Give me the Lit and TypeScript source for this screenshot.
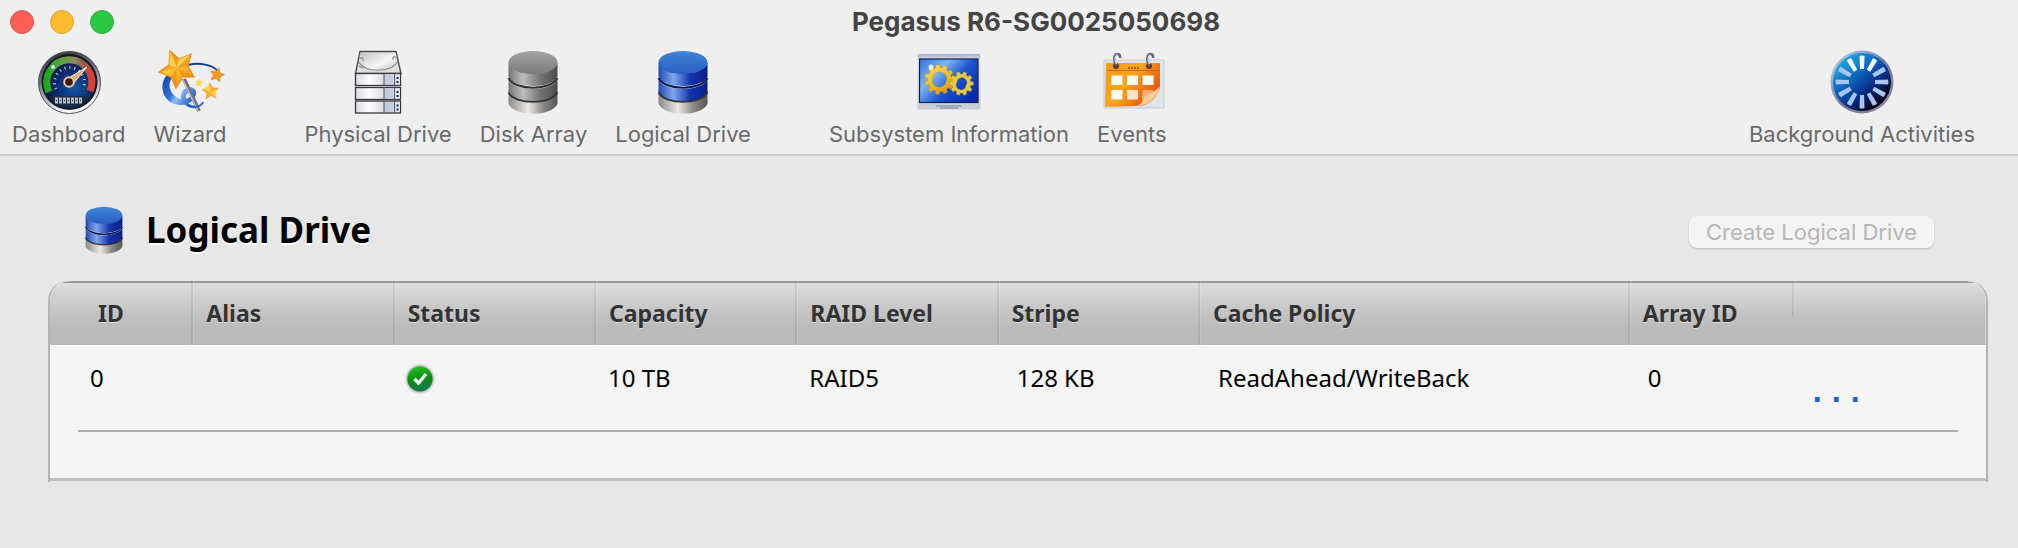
import { LitElement, html, css, svg } from "lit";
import { customElement } from "lit/decorators.js";

/* Points of a star with the given number of teeth. */
function starPoints(cx: number, cy: number, outer: number, inner: number, n: number, start: number): string {
  const pts: string[] = [];
  for (let i = 0; i < n * 2; i++) {
    const r = i % 2 ? inner : outer;
    const a = ((start + (i * 180) / n) * Math.PI) / 180;
    pts.push(`${(cx + r * Math.cos(a)).toFixed(2)},${(cy + r * Math.sin(a)).toFixed(2)}`);
  }
  return pts.join(" ");
}

/* Outline of a cog wheel with squared teeth. */
function gearPoints(cx: number, cy: number, outer: number, inner: number, n: number): string {
  const pts: string[] = [];
  const step = 360 / n;
  for (let i = 0; i < n; i++) {
    const shape: [number, number][] = [[-0.34, inner], [-0.2, outer], [0.2, outer], [0.34, inner]];
    for (const [f, r] of shape) {
      const a = ((i + f) * step * Math.PI) / 180;
      pts.push(`${(cx + r * Math.cos(a)).toFixed(2)},${(cy + r * Math.sin(a)).toFixed(2)}`);
    }
  }
  return pts.join(" ");
}

const dashboardIcon = html`<svg class="icon" viewBox="0 0 64 64" aria-hidden="true">
  <defs>
    <linearGradient id="d-rim" x1="0" y1="0" x2="0.3" y2="1">
      <stop offset="0" stop-color="#2c2c30" /><stop offset="0.45" stop-color="#6c6f80" /><stop offset="1" stop-color="#f4f4fa" />
    </linearGradient>
    <radialGradient id="d-face" cx="0.6" cy="0.6" r="0.6">
      <stop offset="0" stop-color="#1558a8" /><stop offset="0.55" stop-color="#0b2b6e" /><stop offset="1" stop-color="#10182c" />
    </radialGradient>
    <linearGradient id="d-arc" x1="0" y1="0" x2="1" y2="0">
      <stop offset="0" stop-color="#1fa423" /><stop offset="0.3" stop-color="#55a542" /><stop offset="0.6" stop-color="#8f8a5a" /><stop offset="0.82" stop-color="#93604a" /><stop offset="1" stop-color="#e03a34" />
    </linearGradient>
  </defs>
  <circle cx="32.500" cy="32.500" r="31" fill="url(#d-rim)" stroke="#4a4a58" stroke-width="1" />
  <circle cx="32.500" cy="32" r="28" fill="#17191f" />
  <circle cx="32" cy="32" r="26" fill="url(#d-face)" />
  <path d="M12 42A22.500 22.500 0 1 1 53 41" fill="none" stroke="url(#d-arc)" stroke-width="7" />
  <path d="M19 39A15 15 0 1 1 46 39" fill="none" stroke="#c9d6ee" stroke-width="3" stroke-dasharray="1 4" />
  <path d="M13 46h39l-5 7q-14 9-29 0z" fill="#1b2c46" />
  <path d="M18 50.500h28" stroke="#b4c0cc" stroke-width="6" stroke-dasharray="3 1" />
  <path d="M19 50.500h27" stroke="#3a4656" stroke-width="1.500" stroke-dasharray="1 3" />
  <path d="M30 29L50 17L35 35z" fill="#e8b070" stroke="#fff0cf" stroke-width="1" />
  <circle cx="32" cy="32" r="4.800" fill="#3b1710" stroke="#f2c79c" stroke-width="2" />
  <circle cx="16" cy="17" r="2" fill="#fff" opacity="0.850" />
</svg>`;

const wizardIcon = html`<svg class="icon" viewBox="0 0 64 64" aria-hidden="true">
  <defs>
    <linearGradient id="w-star" x1="0" y1="0" x2="0.8" y2="1">
      <stop offset="0" stop-color="#f7941d" /><stop offset="0.45" stop-color="#ffc83a" /><stop offset="1" stop-color="#f08a10" />
    </linearGradient>
    <linearGradient id="w-swirl" x1="0" y1="0" x2="1" y2="0.6">
      <stop offset="0" stop-color="#123fa6" /><stop offset="0.450" stop-color="#2f74dc" /><stop offset="0.600" stop-color="#8cc0f6" /><stop offset="1" stop-color="#1a55c4" />
    </linearGradient>
  </defs>
  <path d="M30 15C42 12 54 15 60 21" fill="none" stroke="#123c9c" stroke-width="2" />
  <path d="M9 25C1 34 4 48 14 53C25 58 36 53 38 44C39 36 28 35 24 42C20 50 28 60 40 58C31 56 27 51 28 46C30 40 35 41 34 44C31 50 22 51 17 46C10 40 10 32 15 27z" fill="url(#w-swirl)" />
  <path d="M26 29L41 61" stroke="#6e7084" stroke-width="4" />
  <path d="M25 30L40 61" stroke="#b9bccb" stroke-width="1.500" />
  <path d="M45 52C43 57 36 58 30 55" fill="none" stroke="#2460c8" stroke-width="2" />
  <polygon points="12,1 21,9 33,4 30,16 36,27 25,27 18,38 13,27 1,22 11,15" fill="url(#w-star)" stroke="#ee8d1a" stroke-width="1.200" />
  <path d="M12 1L19 18L21 9zM33 4L19 18L30 16zM36 27L19 18L25 27zM18 38L19 18L13 27zM1 22L19 18L11 15z" fill="#d96f08" opacity="0.350" />
  <path d="M12 1L19 18L11 15zM33 4L19 18L21 9z" fill="#ffe070" opacity="0.500" />
  <polygon points="${starPoints(59, 25, 7.500, 3.600, 5, -75)}" fill="#f59a1e" stroke="#d97a14" stroke-width="0.600" />
  <polygon points="${starPoints(52.500, 41.500, 8.500, 4, 5, -95)}" fill="#fbb024" stroke="#e88d1a" stroke-width="0.600" />
  <path d="M52 34L52.500 42L45 39zM60 39L52.500 42L57 48z" fill="#ffd659" opacity="0.800" />
  <polygon points="${starPoints(41, 33, 4.500, 2.200, 5, -80)}" fill="#ffd84a" />
</svg>`;

const driveBay = (y: number) => svg`
  <rect x="9.500" y=${y} width="45" height="12" fill="url(#p-bay)" stroke="#38383c" stroke-width="1.300" />
  <rect x="38" y=${y + 1} width="9" height="10" fill="#c3cde0" />
  <path d=${`M38 ${y}v12M48.500 ${y}v12`} stroke="#4b5364" stroke-width="1" />
  <rect x="49" y=${y + 1} width="5" height="10" fill="#dce4f2" />
  <path d=${`M50.500 ${y + 4.500}h2M50.500 ${y + 8.500}h2`} stroke="#1c2c58" stroke-width="2" />`;

const physicalIcon = html`<svg class="icon" viewBox="0 0 64 64" aria-hidden="true">
  <defs>
    <linearGradient id="p-bay" x1="0" y1="0" x2="1" y2="0">
      <stop offset="0" stop-color="#d9d9de" /><stop offset="0.3" stop-color="#fdfdff" /><stop offset="0.6" stop-color="#dfdfe4" />
    </linearGradient>
    <linearGradient id="p-top" x1="0" y1="0" x2="1" y2="1">
      <stop offset="0" stop-color="#c4c4c4" /><stop offset="0.6" stop-color="#f8f8f8" /><stop offset="1" stop-color="#b4b4b4" />
    </linearGradient>
  </defs>
  <path d="M14 1.500h36l5 22H9.500z" fill="#dedede" stroke="#4a4a4a" stroke-width="1.400" />
  <path d="M14 3C10 26 53 26 50 3z" fill="url(#p-top)" />
  <path d="M13 12C18 23 46 23 51 12" fill="none" stroke="#8a8a8a" stroke-width="1.200" />
  <path d="M14 8h3v3M50 7h-3v3M13 16l4 2" fill="none" stroke="#777" stroke-width="1" />
  ${[23.500, 37.500, 51].map(driveBay)}
</svg>`;

/* Three stacked discs, all grey or with the upper two in blue. */
function stackIcon(id: string, cls: string, blue: boolean) {
  const topA = blue ? "#3f86d4" : "#a2a2a2";
  const topB = blue ? "#2a5cc4" : "#7c7c7c";
  return html`<svg class=${cls} viewBox="0 0 64 64" aria-hidden="true">
    <defs>
      <linearGradient id="${id}-a" x1="0" y1="0" x2="1" y2="0">
        <stop offset="0" stop-color=${blue ? "#2448b4" : "#767676"} />
        <stop offset="0.300" stop-color=${blue ? "#7ea6ea" : "#bdbdbd"} />
        <stop offset="0.650" stop-color=${blue ? "#1434ac" : "#747474"} />
        <stop offset="1" stop-color=${blue ? "#081f86" : "#4a4a4a"} />
      </linearGradient>
      <linearGradient id="${id}-b" x1="0" y1="0" x2="1" y2="0">
        <stop offset="0" stop-color="#8c8a88" /><stop offset="0.400" stop-color="#ebe8e6" />
        <stop offset="0.700" stop-color="#8e8b89" /><stop offset="1" stop-color="#565452" />
      </linearGradient>
      <linearGradient id="${id}-t" x1="0" y1="0" x2="0" y2="1">
        <stop offset="0" stop-color=${topA} /><stop offset="1" stop-color=${topB} />
      </linearGradient>
    </defs>
    <path d="M7.500 41C15 56 49 56 56.500 41V54C50 67 14 67 7.500 54z" fill="url(#${id}-b)" />
    <path d="M7.500 30C15 42 49 42 56.500 30V43C50 55 14 55 7.500 43z" fill="url(#${id}-a)" />
    <path d="M7.500 42.500C14 55 50 55 56.500 42.500" fill="none" stroke="#353535" stroke-width="1.800" />
    <path d="M7.500 13V27C14 39 50 39 56.500 27V13z" fill="url(#${id}-a)" />
    <path d="M7.500 28C14 41 50 41 56.500 28" fill="none" stroke=${blue ? "#0a1750" : "#303030"} stroke-width="2" />
    <ellipse cx="32" cy="12.500" rx="24.500" ry="11.500" fill="url(#${id}-t)" />
  </svg>`;
}

const systemIcon = html`<svg class="icon" viewBox="0 0 64 64" aria-hidden="true">
  <defs>
    <linearGradient id="s-screen" x1="0" y1="0" x2="1" y2="0.7">
      <stop offset="0" stop-color="#2c72da" /><stop offset="0.350" stop-color="#7db4f2" /><stop offset="0.650" stop-color="#1a50d0" /><stop offset="1" stop-color="#0a2db0" />
    </linearGradient>
    <linearGradient id="s-frame" x1="0" y1="0" x2="0" y2="1">
      <stop offset="0" stop-color="#a4b0cc" /><stop offset="0.120" stop-color="#e2e6ee" /><stop offset="1" stop-color="#c6ccd8" />
    </linearGradient>
    <linearGradient id="s-gear" x1="0" y1="0" x2="0.5" y2="1">
      <stop offset="0" stop-color="#ffe45a" /><stop offset="1" stop-color="#e0a010" />
    </linearGradient>
  </defs>
  <rect x="0.500" y="4" width="63" height="55.500" rx="1.500" fill="url(#s-frame)" />
  <rect x="2.500" y="9" width="58.500" height="43.500" fill="url(#s-screen)" stroke="#17203c" stroke-width="1.200" />
  <path fill-rule="evenodd" d="M${gearPoints(22.500, 29.500, 15, 12, 11).replace(/ /g, "L")}zM16 27a7 7 0 1 0 13 5a7 7 0 1 0 -13 -5z" fill="url(#s-gear)" stroke="#c08a0c" stroke-width="0.400" />
  <path fill-rule="evenodd" d="M${gearPoints(44.500, 33.500, 12, 9.500, 10).replace(/ /g, "L")}zM40 32a5 5 0 1 0 9 3.500a5 5 0 1 0 -9 -3.500z" fill="#e2ca42" stroke="#a88c20" stroke-width="0.400" />
  <circle cx="14" cy="17" r="2.500" fill="#fff" opacity="0.800" />
  <path d="M19 56h26M23 58h18" stroke="#7b8494" stroke-width="1" />
</svg>`;

const eventsIcon = html`<svg class="icon" viewBox="0 0 64 64" aria-hidden="true">
  <defs>
    <linearGradient id="e-page" x1="0" y1="0" x2="1" y2="0.6">
      <stop offset="0" stop-color="#f59a12" /><stop offset="0.500" stop-color="#fba41c" /><stop offset="1" stop-color="#e8500c" />
    </linearGradient>
    <linearGradient id="e-curl" x1="0" y1="0" x2="1" y2="1">
      <stop offset="0" stop-color="#f08430" /><stop offset="0.600" stop-color="#fbd0a0" /><stop offset="1" stop-color="#f07818" />
    </linearGradient>
  </defs>
  <rect x="3.500" y="9.500" width="61" height="49" rx="1" fill="#c5cbd8" />
  <rect x="4.500" y="10.500" width="59" height="47" fill="#dfe3ea" />
  <path d="M6 13H60V38C56 50 48 56 36 56L5 57z" fill="url(#e-page)" />
  <path d="M7 20.500H59" stroke="#b8660c" stroke-width="0.900" />
  <path d="M28 18h11" stroke="#a85808" stroke-width="2" stroke-dasharray="2 1" />
  <g fill="#fffdf4">
    <rect x="11.500" y="25.500" width="11" height="9.500" /><rect x="27" y="25.500" width="11" height="9.500" /><rect x="42.500" y="25.500" width="11" height="9.500" />
    <rect x="11.500" y="40" width="11" height="9.500" /><rect x="27" y="40" width="11" height="9.500" opacity="0.800" /><path d="M42.500 40h11l-4 9.500h-7z" opacity="0.450" />
  </g>
  <path d="M60 36C55 42 48 45 41 46C45 50 42 54 36 56C50 55 58 48 60 36z" fill="url(#e-curl)" />
  ${[14.500, 47.500].map((x) => svg`
    <circle cx=${x + 1.500} cy="16" r="3" fill="#5c3a20" />
    <path d=${`M${x + 2} 16C${x - 2} 9 ${x} 4 ${x + 3} 4Q${x + 6} 4 ${x + 5.500} 8`} fill="none" stroke="#5e6680" stroke-width="2.600" />
    <path d=${`M${x + 2} 14C${x - 1} 9 ${x + 1} 5 ${x + 3} 4.500`} fill="none" stroke="#d8deea" stroke-width="1.200" />`)}
</svg>`;

const activityIcon = html`<svg class="icon" viewBox="0 0 64 64" aria-hidden="true">
  <defs>
    <linearGradient id="a-rim" x1="0" y1="0" x2="1" y2="1">
      <stop offset="0" stop-color="#b9e0f4" /><stop offset="0.500" stop-color="#76789c" /><stop offset="1" stop-color="#8d8a98" />
    </linearGradient>
    <linearGradient id="a-face" x1="0.150" y1="0.050" x2="0.850" y2="0.900">
      <stop offset="0" stop-color="#2ab0e4" /><stop offset="0.400" stop-color="#0b62bc" /><stop offset="0.700" stop-color="#06257c" /><stop offset="0.950" stop-color="#02030e" />
    </linearGradient>
  </defs>
  <circle cx="32" cy="32" r="31.500" fill="url(#a-rim)" />
  <circle cx="32" cy="32" r="29" fill="url(#a-face)" />
  ${Array.from({ length: 12 }, (_, i) => svg`
    <path d="M29.500 6q2.500 -1 5 0l-0.500 13h-4z" transform=${`rotate(${i * 30} 32 32)`} fill=${i < 2 || i === 11 ? "#f2fbff" : "#a9c4ee"} />`)}
</svg>`;

const checkIcon = html`<svg class="check" viewBox="0 0 32 32" role="img" aria-label="OK">
  <defs>
    <linearGradient id="c-fill" x1="0.400" y1="0" x2="0.600" y2="1">
      <stop offset="0" stop-color="#1fc41a" /><stop offset="0.500" stop-color="#0a8a14" /><stop offset="1" stop-color="#187a52" />
    </linearGradient>
    <radialGradient id="c-halo"><stop offset="0.780" stop-color="#a0aca2" /><stop offset="1" stop-color="#e4e4e4" stop-opacity="0" /></radialGradient>
  </defs>
  <circle cx="16" cy="16" r="16" fill="url(#c-halo)" />
  <circle cx="16" cy="16" r="12.500" fill="url(#c-fill)" />
  <path d="M10.500 16l4 4l7.500 -9" fill="none" stroke="#f4fff4" stroke-width="3.400" />
</svg>`;

const columns = ["ID", "Alias", "Status", "Capacity", "RAID Level", "Stripe", "Cache Policy", "Array ID"];

@customElement("app-root")
export class AppRoot extends LitElement {
  static styles = css`
    :host {
      display: block;
      min-height: 100vh;
      background: #e7e7e7;
      font-family: Inter, "Liberation Sans", sans-serif;
      color: #000;
    }
    button { font: inherit; border: 0; background: none; padding: 0; margin: 0; }
    header { background: #efefef; border-bottom: 2px solid #cdcdcd; }
    .titlebar { display: flex; align-items: center; height: 44px; padding: 0 10px; }
    .lights { display: flex; gap: 16px; }
    .light { width: 24px; height: 24px; border-radius: 50%; box-sizing: border-box; }
    .close { background: #ff5f57; border: 1px solid #e2554e; }
    .minimise { background: #febc2e; border: 1px solid #e0a53a; }
    .zoom { background: #28c840; border: 1px solid #2fb040; }
    .title { flex: 1; margin: 0 50px 0 0; text-align: center; font-size: 26px; line-height: 28px; font-weight: 700; color: #444; }
    .tools { display: flex; align-items: flex-start; gap: 28px; padding: 6px 43px 6px 12px; }
    .tool { display: flex; flex-direction: column; align-items: center; gap: 6px; color: #6a6a6a; font-size: 22px; line-height: 28px; white-space: nowrap; }
    .apart { margin-left: 50px; }
    .last { margin-left: auto; }
    .icon { display: block; width: 64px; height: 64px; overflow: visible; }
    main { padding: 48px 30px 20px 48px; }
    .heading { display: flex; align-items: center; padding: 0 54px 0 32px; height: 52px; }
    .mini { width: 48px; height: 48px; }
    h1 { flex: 1; margin: 0 0 0 18px; font: 700 35px/48px "Noto Sans", sans-serif; text-shadow: 0 2px 0 #fff; }
    .create { margin-top: 4px; padding: 0 17px; border-radius: 8px; background: #f4f4f4; color: #b6b6b6; font-size: 22px; line-height: 32px; box-shadow: 0 1px 2px rgba(0, 0, 0, 0.2); }
    .panel { margin-top: 25px; border-radius: 20px 20px 0 0; border: solid #b4b4b4; border-width: 0 2px; padding-bottom: 1px; overflow: hidden; background: #e7e7e7; }
    .sheet { background: #f5f5f5; border-bottom: 3px solid #c0c0c0; border-radius: 20px 20px 0 0; overflow: hidden; }
    table { width: 100%; table-layout: fixed; border-collapse: collapse; font-family: "Noto Sans", sans-serif; }
    thead tr { background: linear-gradient(#9a9a9a 0 2px, #dedede 2px, #d2d2d2 14px, #c4c4c4 32px, #bbb 46px, #bababa); }
    th { height: 64px; padding: 0 0 0 15px; text-align: left; font-size: 23px; line-height: 28px; color: #333; text-shadow: 0 1px 0 #ddd; background: linear-gradient(90deg, rgba(0, 0, 0, 0.07) 0 2px, rgba(255, 255, 255, 0.15) 2px) left top / 3px 100% no-repeat; }
    th:first-child { padding-left: 48px; background: none; }
    th:last-child { background-size: 3px 36px; }
    td { height: 85px; box-sizing: border-box; padding: 17px 0 0 14px; vertical-align: top; font-size: 24px; line-height: 32px; white-space: nowrap; box-shadow: inset 0 1px 0 #fff; }
    td:first-child { padding-left: 40px; }
    .stripe, .policy, .array { padding-left: 20px; }
    .status { padding: 18px 0 0 11px; }
    .check { display: block; width: 32px; height: 32px; }
    .actions { padding: 32px 0 0 20px; }
    .more { display: block; color: #1c62e0; font: 700 26px/32px "DejaVu Sans", sans-serif; }
    .filler { height: 46px; margin: 0 28px; border-top: 2px solid #acacac; }
    .id { width: 7.3%; }
    .regular { width: 10.4%; }
    .wide { width: 22.2%; }
    .narrow { width: 8.5%; }
  `;

  render() {
    return html`
      <header>
        <div class="titlebar">
          <div class="lights">
            <button class="light close" aria-label="Close"></button>
            <button class="light minimise" aria-label="Minimise"></button>
            <button class="light zoom" aria-label="Zoom"></button>
          </div>
          <p class="title">Pegasus R6-SG0025050698</p>
        </div>
        <nav class="tools">
          <button class="tool">${dashboardIcon}<span>Dashboard</span></button>
          <button class="tool">${wizardIcon}<span>Wizard</span></button>
          <button class="tool apart">${physicalIcon}<span>Physical Drive</span></button>
          <button class="tool">${stackIcon("g", "icon", false)}<span>Disk Array</span></button>
          <button class="tool">${stackIcon("b", "icon", true)}<span>Logical Drive</span></button>
          <button class="tool apart">${systemIcon}<span>Subsystem Information</span></button>
          <button class="tool">${eventsIcon}<span>Events</span></button>
          <button class="tool last">${activityIcon}<span>Background Activities</span></button>
        </nav>
      </header>
      <main>
        <div class="heading">
          ${stackIcon("m", "mini", true)}
          <h1>Logical Drive</h1>
          <button class="create" disabled>Create Logical Drive</button>
        </div>
        <section class="panel">
          <div class="sheet">
            <table>
              <colgroup>
                <col class="id" />
                <col class="regular" /><col class="regular" /><col class="regular" /><col class="regular" /><col class="regular" />
                <col class="wide" /><col class="narrow" /><col />
              </colgroup>
              <thead>
                <tr>${columns.map((c) => html`<th scope="col">${c}</th>`)}<th></th></tr>
              </thead>
              <tbody>
                <tr>
                  <td>0</td>
                  <td></td>
                  <td class="status">${checkIcon}</td>
                  <td>10 TB</td>
                  <td>RAID5</td>
                  <td class="stripe">128 KB</td>
                  <td class="policy">ReadAhead/WriteBack</td>
                  <td class="array">0</td>
                  <td class="actions"><button class="more" aria-label="More actions">. . .</button></td>
                </tr>
              </tbody>
            </table>
            <div class="filler"></div>
          </div>
        </section>
      </main>
    `;
  }
}
